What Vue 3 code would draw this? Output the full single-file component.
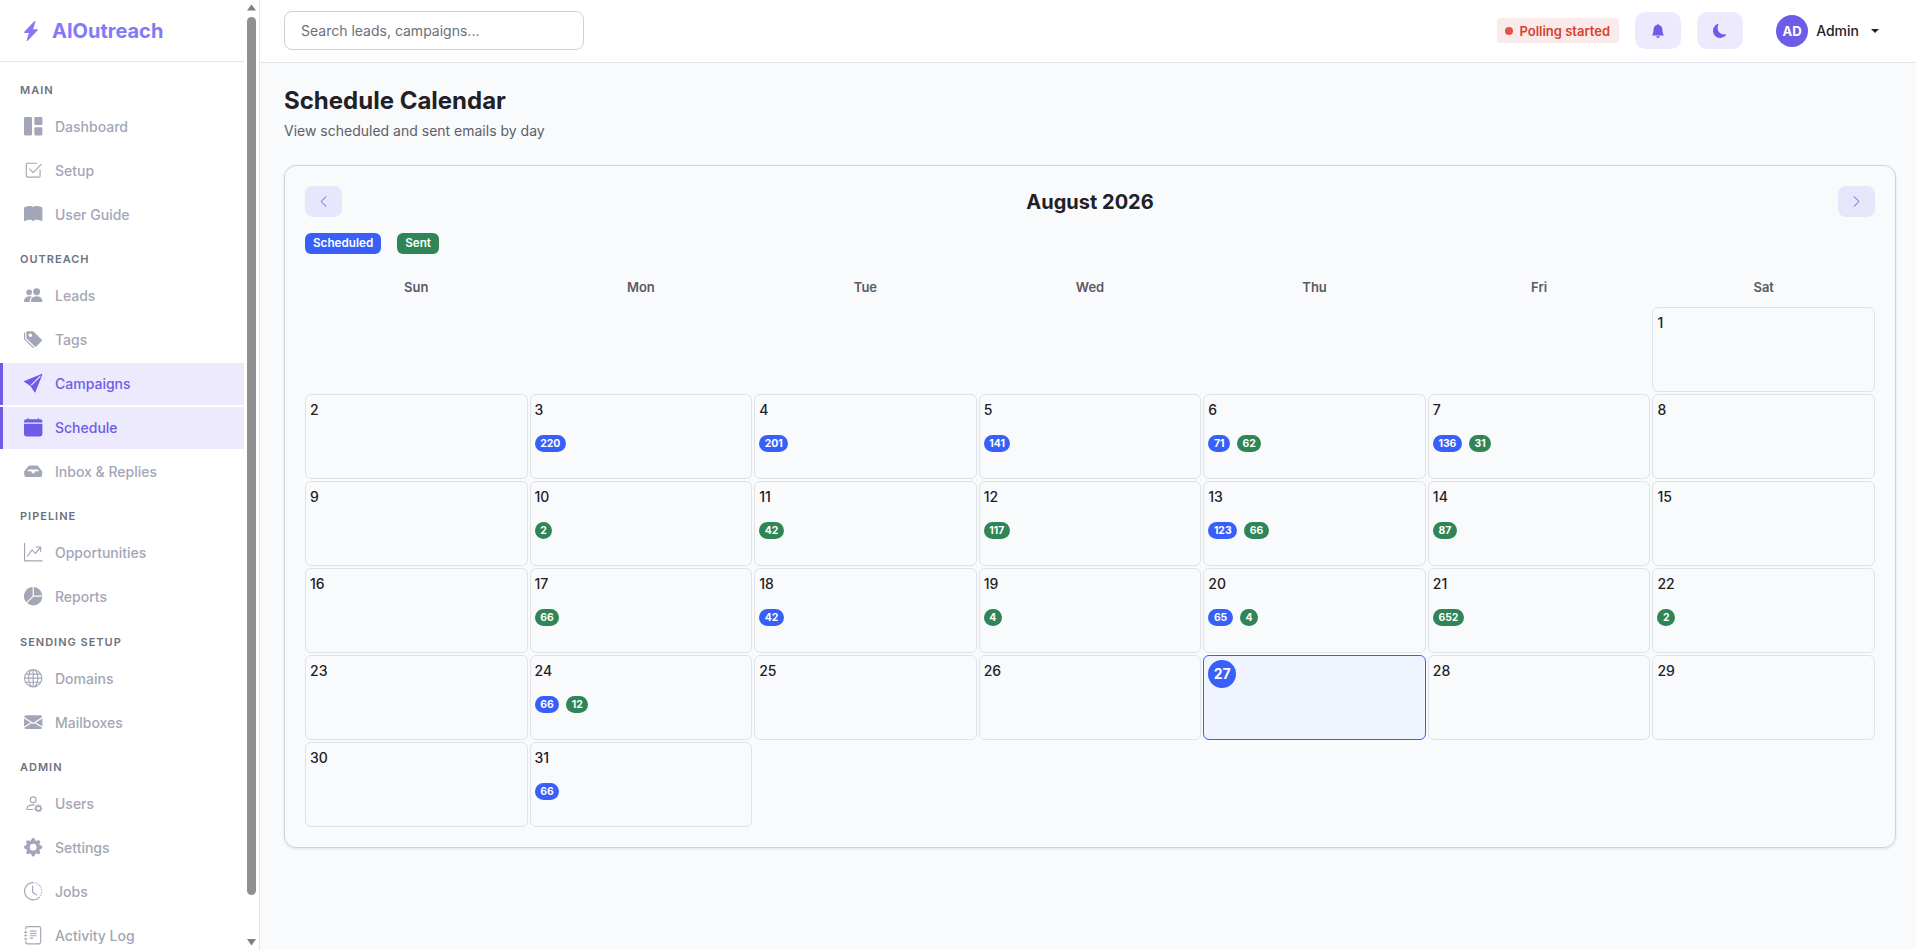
<script setup>
const icons = {
  grid: 'M0 1a1 1 0 0 1 1-1h5a1 1 0 0 1 1 1v14a1 1 0 0 1-1 1H1a1 1 0 0 1-1-1V1zm9 0a1 1 0 0 1 1-1h5a1 1 0 0 1 1 1v5a1 1 0 0 1-1 1h-5a1 1 0 0 1-1-1V1zm0 9a1 1 0 0 1 1-1h5a1 1 0 0 1 1 1v5a1 1 0 0 1-1 1h-5a1 1 0 0 1-1-1v-5z',
  check: 'M3 14.5A1.5 1.5 0 0 1 1.5 13V3A1.5 1.5 0 0 1 3 1.5h8a.5.5 0 0 1 0 1H3a.5.5 0 0 0-.5.5v10a.5.5 0 0 0 .5.5h10a.5.5 0 0 0 .5-.5V8a.5.5 0 0 1 1 0v5a1.5 1.5 0 0 1-1.5 1.5H3zM15.354 3.354l-7 7a.5.5 0 0 1-.708 0l-3-3a.5.5 0 1 1 .708-.708L8 9.293l6.646-6.647a.5.5 0 0 1 .708.708z',
  book: 'M8 1.783C7.015.936 5.587.81 4.287.94c-1.514.153-3.042.672-3.994 1.105A.5.5 0 0 0 0 2.5v11a.5.5 0 0 0 .707.455c.882-.4 2.303-.881 3.68-1.02 1.409-.142 2.59.087 3.223.877a.5.5 0 0 0 .78 0c.633-.79 1.814-1.019 3.222-.877 1.378.139 2.8.62 3.681 1.02A.5.5 0 0 0 16 13.5v-11a.5.5 0 0 0-.293-.455c-.952-.433-2.48-.952-3.994-1.105C10.413.809 8.985.936 8 1.783z',
  people: 'M7 14s-1 0-1-1 1-4 5-4 5 3 5 4-1 1-1 1H7Zm4-6a3 3 0 1 0 0-6 3 3 0 0 0 0 6Zm-5.784 6A2.238 2.238 0 0 1 5 13c0-1.355.68-2.75 1.936-3.72A6.325 6.325 0 0 0 5 9c-4 0-5 3-5 4s1 1 1 1h4.216ZM4.5 8a2.5 2.5 0 1 0 0-5 2.5 2.5 0 0 0 0 5Z',
  tags: 'M2 2a1 1 0 0 1 1-1h4.586a1 1 0 0 1 .707.293l7 7a1 1 0 0 1 0 1.414l-4.586 4.586a1 1 0 0 1-1.414 0l-7-7A1 1 0 0 1 2 6.586V2zm3.5 4a1.5 1.5 0 1 0 0-3 1.5 1.5 0 0 0 0 3zM1.293 7.793A1 1 0 0 1 1 7.086V2a1 1 0 0 0-1 1v4.586a1 1 0 0 0 .293.707l7 7a1 1 0 0 0 1.414 0l.043-.043-7.457-7.457z',
  send: 'M15.964.686a.5.5 0 0 0-.65-.65L.767 5.855H.766l-.452.18a.5.5 0 0 0-.082.887l.41.26.001.002 4.995 3.178 3.178 4.995.002.002.26.41a.5.5 0 0 0 .886-.083l6-15Zm-1.833 1.89L6.637 10.07l-.215-.338a.5.5 0 0 0-.154-.154l-.338-.215 7.494-7.494 1.178-.471-.47 1.178Z',
  calendar: 'M3.5 0a.5.5 0 0 1 .5.5V1h8V.5a.5.5 0 0 1 1 0V1h1a2 2 0 0 1 2 2v11a2 2 0 0 1-2 2H2a2 2 0 0 1-2-2V5h16V4H0V3a2 2 0 0 1 2-2h1V.5a.5.5 0 0 1 .5-.5z',
  inbox: 'M3.81 3.563A1.5 1.5 0 0 1 4.98 3h6.04a1.5 1.5 0 0 1 1.17.563l3.7 4.625a.5.5 0 0 1 .106.374l-.39 3.124A1.5 1.5 0 0 1 14.117 13H1.883a1.5 1.5 0 0 1-1.489-1.314l-.39-3.124a.5.5 0 0 1 .106-.374zM3.9 6.6 2.8 8H6a.5.5 0 0 1 .5.5 1.5 1.5 0 1 0 3 0A.5.5 0 0 1 10 8h3.2l-1.1-1.4z',
  graph: 'M0 0h1v15h15v1H0V0Zm10 3.5a.5.5 0 0 1 .5-.5h4a.5.5 0 0 1 .5.5v4a.5.5 0 0 1-1 0V4.9l-3.613 4.417a.5.5 0 0 1-.74.037L7.06 6.767l-3.656 5.027a.5.5 0 0 1-.808-.588l4-5.5a.5.5 0 0 1 .758-.06l2.609 2.61L13.445 4H10.5a.5.5 0 0 1-.5-.5Z',
  pie: 'M15.985 8.5H8.207l-5.5 5.5a8 8 0 0 0 13.277-5.5zM2 13.292A8 8 0 0 1 7.5.015v7.778l-5.5 5.5zM8.5.015V7.5h7.485A8.001 8.001 0 0 0 8.5.015z',
  globe: 'M0 8a8 8 0 1 1 16 0A8 8 0 0 1 0 8zm7.5-6.923c-.67.204-1.335.82-1.887 1.855A7.97 7.97 0 0 0 5.145 4H7.5V1.077zM4.09 4a9.267 9.267 0 0 1 .64-1.539 6.7 6.7 0 0 1 .597-.933A7.025 7.025 0 0 0 2.255 4H4.09zm-.582 3.5c.03-.877.138-1.718.312-2.5H1.674a6.958 6.958 0 0 0-.656 2.5h2.49zM4.847 5a12.5 12.5 0 0 0-.338 2.5H7.5V5H4.847zM8.5 5v2.5h2.99a12.495 12.495 0 0 0-.337-2.5H8.5zM4.51 8.5a12.5 12.5 0 0 0 .337 2.5H7.5V8.5H4.51zm3.99 0V11h2.653c.187-.765.306-1.608.338-2.5H8.5zM5.145 12c.138.386.295.744.468 1.068.552 1.035 1.218 1.65 1.887 1.855V12H5.145zm.182 2.472a6.696 6.696 0 0 1-.597-.933A9.268 9.268 0 0 1 4.09 12H2.255a7.024 7.024 0 0 0 3.072 2.472zM3.82 11a13.652 13.652 0 0 1-.312-2.5h-2.49c.062.89.291 1.733.656 2.5H3.82zm6.853 3.472A7.024 7.024 0 0 0 13.745 12H11.91a9.27 9.27 0 0 1-.64 1.539 6.688 6.688 0 0 1-.597.933zM8.5 12v2.923c.67-.204 1.335-.82 1.887-1.855.173-.324.33-.682.468-1.068H8.5zm3.68-1h2.146c.365-.767.594-1.61.656-2.5h-2.49a13.65 13.65 0 0 1-.312 2.5zm2.802-3.5a6.959 6.959 0 0 0-.656-2.5H12.18c.174.782.282 1.623.312 2.5h2.49zM11.27 2.461c.247.464.462.98.64 1.539h1.835a7.024 7.024 0 0 0-3.072-2.472c.218.284.418.598.597.933zM10.855 4a7.966 7.966 0 0 0-.468-1.068C9.835 1.897 9.17 1.282 8.5 1.077V4h2.355z',
  mail: 'M.05 3.555A2 2 0 0 1 2 2h12a2 2 0 0 1 1.95 1.555L8 8.414.05 3.555ZM0 4.697v7.104l5.803-3.558L0 4.697ZM6.761 8.83l-6.57 4.027A2 2 0 0 0 2 14h12a2 2 0 0 0 1.808-1.144l-6.57-4.027L8 9.586l-1.239-.757Zm3.436-.586L16 11.801V4.697l-5.803 3.546Z',
  usergear: 'M11 5a3 3 0 1 1-6 0 3 3 0 0 1 6 0ZM8 7a2 2 0 1 0 0-4 2 2 0 0 0 0 4Zm.256 7a4.474 4.474 0 0 1-.229-1.004H3c.001-.246.154-.986.832-1.664C4.484 10.68 5.711 10 8 10c.26 0 .507.009.74.025.226-.341.496-.65.804-.918C9.077 9.038 8.564 9 8 9c-5 0-6 3-6 4s1 1 1 1h5.256Zm3.63-4.54c.18-.613 1.048-.613 1.229 0l.043.148a.64.64 0 0 0 .921.382l.136-.074c.561-.306 1.175.308.87.869l-.075.136a.64.64 0 0 0 .382.92l.149.045c.612.18.612 1.048 0 1.229l-.15.043a.64.64 0 0 0-.38.921l.074.136c.305.561-.309 1.175-.87.87l-.136-.075a.64.64 0 0 0-.92.382l-.045.149c-.18.612-1.048.612-1.229 0l-.043-.15a.64.64 0 0 0-.921-.38l-.136.074c-.561.305-1.175-.309-.87-.87l.075-.136a.64.64 0 0 0-.382-.92l-.148-.045c-.613-.18-.613-1.048 0-1.229l.148-.043a.64.64 0 0 0 .382-.921l-.074-.136c-.306-.561.308-1.175.869-.87l.136.075a.64.64 0 0 0 .92-.382l.045-.149ZM14 12.5a1.5 1.5 0 1 0-3 0 1.5 1.5 0 0 0 3 0Z',
  gear: 'M9.405 1.05c-.413-1.4-2.397-1.4-2.81 0l-.1.34a1.464 1.464 0 0 1-2.105.872l-.31-.17c-1.283-.698-2.686.705-1.987 1.987l.169.311c.446.82.023 1.841-.872 2.105l-.34.1c-1.4.413-1.4 2.397 0 2.81l.34.1a1.464 1.464 0 0 1 .872 2.105l-.17.31c-.698 1.283.705 2.686 1.987 1.987l.311-.169a1.464 1.464 0 0 1 2.105.872l.1.34c.413 1.4 2.397 1.4 2.81 0l.1-.34a1.464 1.464 0 0 1 2.105-.872l.31.17c1.283.698 2.686-.705 1.987-1.987l-.169-.311a1.464 1.464 0 0 1 .872-2.105l.34-.1c1.4-.413 1.4-2.397 0-2.81l-.34-.1a1.464 1.464 0 0 1-.872-2.105l.17-.31c.698-1.283-.705-2.686-1.987-1.987l-.311.169a1.464 1.464 0 0 1-2.105-.872l-.1-.34zM8 10.93a2.929 2.929 0 1 1 0-5.86 2.929 2.929 0 0 1 0 5.858z',
  clock: 'M8.515 1.019A7 7 0 0 0 8 1V0a8 8 0 0 1 .589.022l-.074.997zm2.004.45a7.003 7.003 0 0 0-.985-.299l.219-.976c.383.086.76.2 1.126.342l-.36.933zm1.37.71a7.01 7.01 0 0 0-.439-.27l.493-.87a8.025 8.025 0 0 1 .979.654l-.615.789a6.996 6.996 0 0 0-.418-.302zm1.834 1.79a6.99 6.99 0 0 0-.653-.796l.724-.69c.27.285.52.59.747.91l-.818.576zm.744 1.352a7.08 7.08 0 0 0-.214-.468l.893-.45a7.976 7.976 0 0 1 .45 1.088l-.95.313a7.023 7.023 0 0 0-.179-.483zm.53 2.507a6.991 6.991 0 0 0-.1-1.025l.985-.17c.067.386.106.778.116 1.17l-1 .025zm-.131 1.538c.033-.17.06-.339.081-.51l.993.123a7.957 7.957 0 0 1-.23 1.155l-.964-.267c.046-.165.086-.332.12-.501zm-.952 2.379c.184-.29.346-.594.486-.908l.914.405c-.16.36-.345.706-.555 1.038l-.845-.535zm-.964 1.205c.122-.122.239-.248.35-.378l.758.653a8.073 8.073 0 0 1-.401.432l-.707-.707zM8 1a7 7 0 1 0 4.95 11.95l.707.707A8.001 8.001 0 1 1 8 0v1zM7.5 3a.5.5 0 0 1 .5.5v5.21l3.248 1.856a.5.5 0 0 1-.496.868l-3.5-2A.5.5 0 0 1 7 9V3.5a.5.5 0 0 1 .5-.5z',
  journal: 'M5 10.5a.5.5 0 0 1 .5-.5h2a.5.5 0 0 1 0 1h-2a.5.5 0 0 1-.5-.5zm0-2a.5.5 0 0 1 .5-.5h5a.5.5 0 0 1 0 1h-5a.5.5 0 0 1-.5-.5zm0-2a.5.5 0 0 1 .5-.5h5a.5.5 0 0 1 0 1h-5a.5.5 0 0 1-.5-.5zm0-2a.5.5 0 0 1 .5-.5h5a.5.5 0 0 1 0 1h-5a.5.5 0 0 1-.5-.5zM3 0h10a2 2 0 0 1 2 2v12a2 2 0 0 1-2 2H3a2 2 0 0 1-2-2v-1h1v1a1 1 0 0 0 1 1h10a1 1 0 0 0 1-1V2a1 1 0 0 0-1-1H3a1 1 0 0 0-1 1v1H1V2a2 2 0 0 1 2-2zM1 5v-.5a.5.5 0 0 1 1 0V5h.5a.5.5 0 0 1 0 1h-2a.5.5 0 0 1 0-1H1zm0 3v-.5a.5.5 0 0 1 1 0V8h.5a.5.5 0 0 1 0 1h-2a.5.5 0 0 1 0-1H1zm0 3v-.5a.5.5 0 0 1 1 0v.5h.5a.5.5 0 0 1 0 1h-2a.5.5 0 0 1 0-1H1z',
  bolt: 'M11.251.068a.5.5 0 0 1 .227.58L9.677 6.5H13a.5.5 0 0 1 .364.843l-8 8.5a.5.5 0 0 1-.842-.49L6.323 9.5H3a.5.5 0 0 1-.364-.843l8-8.5a.5.5 0 0 1 .615-.09z',
  bell: 'M8 16a2 2 0 0 0 2-2H6a2 2 0 0 0 2 2zm.995-14.901a1 1 0 1 0-1.99 0A5.002 5.002 0 0 0 3 6c0 1.098-.5 6-2 7h14c-1.5-1-2-5.902-2-7 0-2.42-1.72-4.44-4.005-4.901z',
  moon: 'M6 .278a.768.768 0 0 1 .08.858 7.208 7.208 0 0 0-.878 3.46c0 4.021 3.278 7.277 7.318 7.277.527 0 1.04-.055 1.533-.16a.787.787 0 0 1 .81.316.733.733 0 0 1-.031.893A8.349 8.349 0 0 1 8.344 16C3.734 16 0 12.286 0 7.71 0 4.266 2.114 1.312 5.124.06A.752.752 0 0 1 6 .278z',
  left: 'M11.354 1.646a.5.5 0 0 1 0 .708L5.707 8l5.647 5.646a.5.5 0 0 1-.708.708l-6-6a.5.5 0 0 1 0-.708l6-6a.5.5 0 0 1 .708 0z',
  right: 'M4.646 1.646a.5.5 0 0 1 .708 0l6 6a.5.5 0 0 1 0 .708l-6 6a.5.5 0 0 1-.708-.708L10.293 8 4.646 2.354a.5.5 0 0 1 0-.708z',
}

const navSections = [
  { title: 'MAIN', items: [
    { label: 'Dashboard', icon: 'grid' },
    { label: 'Setup', icon: 'check' },
    { label: 'User Guide', icon: 'book' },
  ] },
  { title: 'OUTREACH', items: [
    { label: 'Leads', icon: 'people' },
    { label: 'Tags', icon: 'tags' },
    { label: 'Campaigns', icon: 'send', active: true },
    { label: 'Schedule', icon: 'calendar', active: true },
    { label: 'Inbox & Replies', icon: 'inbox' },
  ] },
  { title: 'PIPELINE', items: [
    { label: 'Opportunities', icon: 'graph' },
    { label: 'Reports', icon: 'pie' },
  ] },
  { title: 'SENDING SETUP', items: [
    { label: 'Domains', icon: 'globe' },
    { label: 'Mailboxes', icon: 'mail' },
  ] },
  { title: 'ADMIN', items: [
    { label: 'Users', icon: 'usergear' },
    { label: 'Settings', icon: 'gear' },
    { label: 'Jobs', icon: 'clock' },
    { label: 'Activity Log', icon: 'journal' },
  ] },
]

const weekdays = ['Sun', 'Mon', 'Tue', 'Wed', 'Thu', 'Fri', 'Sat']

// [scheduled, sent] per day
const counts = {
  3: [220], 4: [201], 5: [141], 6: [71, 62], 7: [136, 31],
  10: [0, 2], 11: [0, 42], 12: [0, 117], 13: [123, 66], 14: [0, 87],
  17: [0, 66], 18: [42], 19: [0, 4], 20: [65, 4], 21: [0, 652], 22: [0, 2],
  24: [66, 12], 31: [66],
}

const blanks = 6
const days = Array.from({ length: 31 }, (_, i) => {
  const c = counts[i + 1] || []
  return { day: i + 1, scheduled: c[0] || 0, sent: c[1] || 0, today: i + 1 === 27 }
})
</script>

<template>
  <div class="layout">
    <aside class="sidebar">
      <div class="side-scroll">
        <div class="brand">
          <svg class="brand-icon" viewBox="0 0 16 16" fill="currentColor"><path :d="icons.bolt" /></svg>
          <span>AIOutreach</span>
        </div>
        <nav class="nav">
          <div v-for="section in navSections" :key="section.title" class="nav-section">
            <div class="nav-title">{{ section.title }}</div>
            <a v-for="item in section.items" :key="item.label" class="nav-item" :class="{ active: item.active }">
              <svg class="nav-icon" viewBox="0 0 16 16" fill="currentColor" fill-rule="evenodd"><path :d="icons[item.icon]" /></svg>
              <span>{{ item.label }}</span>
            </a>
          </div>
        </nav>
      </div>
      <!-- native scrollbars don't show in the headless shot, so this one is drawn -->
      <div class="scrollbar">
        <svg class="arrow" viewBox="0 0 15 17"><path d="M3 10.5 7.5 4.5 12 10.5z" /></svg>
        <div class="thumb"></div>
        <svg class="arrow bottom" viewBox="0 0 15 17"><path d="M3 6 7.5 12.5 12 6z" /></svg>
      </div>
    </aside>

    <div class="main">
      <header class="topbar">
        <input class="search" type="text" placeholder="Search leads, campaigns..." />
        <div class="topbar-right">
          <div class="polling"><span class="dot"></span>Polling started</div>
          <button class="icon-btn">
            <svg viewBox="0 0 16 16" fill="currentColor"><path :d="icons.bell" /></svg>
          </button>
          <button class="icon-btn">
            <svg viewBox="0 0 16 16" fill="currentColor"><path :d="icons.moon" /></svg>
          </button>
          <div class="user">
            <div class="avatar">AD</div>
            <span class="user-name">Admin</span>
            <span class="caret"></span>
          </div>
        </div>
      </header>

      <main class="content">
        <h1 class="page-title">Schedule Calendar</h1>
        <p class="page-sub">View scheduled and sent emails by day</p>

        <section class="card">
          <div class="card-head">
            <button class="month-btn">
              <svg viewBox="0 0 16 16" fill="currentColor"><path :d="icons.left" /></svg>
            </button>
            <h2 class="month">August 2026</h2>
            <button class="month-btn">
              <svg viewBox="0 0 16 16" fill="currentColor"><path :d="icons.right" /></svg>
            </button>
          </div>

          <div class="legend">
            <span class="legend-tag blue">Scheduled</span>
            <span class="legend-tag green">Sent</span>
          </div>

          <div class="grid">
            <div v-for="d in weekdays" :key="d" class="weekday">{{ d }}</div>
            <div v-for="n in blanks" :key="'b' + n"></div>
            <div v-for="d in days" :key="d.day" class="cell" :class="{ today: d.today }">
              <div class="num">{{ d.day }}</div>
              <div v-if="d.scheduled || d.sent" class="pills">
                <span v-if="d.scheduled" class="pill blue">{{ d.scheduled }}</span>
                <span v-if="d.sent" class="pill green">{{ d.sent }}</span>
              </div>
            </div>
          </div>
        </section>
      </main>
    </div>
  </div>
</template>

<style>
html, body {
  margin: 0;
  height: 100%;
  overflow: hidden;
}
</style>

<style scoped>
.layout {
  display: flex;
  height: 100vh;
  font-family: Inter, "Noto Sans", sans-serif;
  color: #1f2126;
  background: #f9fafc;
}

.sidebar {
  width: 260px;
  flex: none;
  box-sizing: border-box;
  background: #fff;
  border-right: 1px solid #e2e5ee;
  display: flex;
  overflow: hidden;
}

.side-scroll {
  width: 244px;
  flex: none;
}

.scrollbar {
  width: 15px;
  flex: none;
  display: flex;
  flex-direction: column;
  align-items: center;
}

.arrow {
  width: 15px;
  height: 17px;
  flex: none;
  fill: #808080;
}

.arrow.bottom {
  margin-top: auto;
}

.thumb {
  width: 9px;
  height: 878px;
  flex: none;
  border-radius: 5px;
  background: #8f8f8f;
}

.brand {
  height: 62px;
  box-sizing: border-box;
  border-bottom: 1px solid #e2e5ee;
  display: flex;
  align-items: center;
  gap: 11px;
  padding-left: 21px;
  font-size: 20px;
  font-weight: 700;
  color: #8279f6;
}

.brand-icon {
  width: 20px;
  height: 20px;
}

.nav {
  padding-top: 21px;
}

.nav-section + .nav-section {
  margin-top: 16px;
}

.nav-section:nth-child(4) {
  margin-top: 17px;
}

.nav-title {
  padding-left: 20px;
  margin-bottom: 9px;
  font-size: 11px;
  line-height: 14px;
  font-weight: 600;
  letter-spacing: 1px;
  color: #6b7280;
}

.nav-item {
  height: 42px;
  box-sizing: border-box;
  display: flex;
  align-items: center;
  gap: 12.3px;
  padding: 0 0 1px 21.3px;
  border-left: 3px solid transparent;
  font-size: 14px;
  font-weight: 500;
  color: #a3a6b6;
}

.nav-item + .nav-item {
  margin-top: 2px;
}

.nav-item.active {
  background: #eeeafe;
  border-left-color: #6c5ce7;
  color: #6c5ce7;
}

.nav-icon {
  width: 18.4px;
  height: 18.4px;
  flex: none;
}

.main {
  flex: 1;
  min-width: 0;
  display: flex;
  flex-direction: column;
}

.topbar {
  height: 63px;
  box-sizing: border-box;
  flex: none;
  background: #fff;
  border-bottom: 1px solid #e2e5ee;
  display: flex;
  align-items: center;
  justify-content: space-between;
  padding: 0 24px 1px;
}

.search {
  width: 300px;
  height: 39px;
  box-sizing: border-box;
  padding: 0 16px;
  border: 1px solid #cfd2d9;
  border-radius: 8px;
  background: #fff;
  font-family: inherit;
  font-size: 14px;
  outline: none;
}

.search::placeholder {
  color: #6b7078;
}

.topbar-right {
  display: flex;
  align-items: center;
  gap: 16px;
}

.polling {
  height: 25px;
  display: flex;
  align-items: center;
  gap: 6px;
  padding: 0 9px 0 8px;
  border-radius: 4px;
  background: #fbeaea;
  color: #d8412f;
  font-size: 13px;
  font-weight: 600;
}

.dot {
  width: 8px;
  height: 8px;
  border-radius: 50%;
  background: #e0564a;
}

.icon-btn {
  width: 46px;
  height: 37px;
  border: none;
  border-radius: 10px;
  background: #eeeafe;
  color: #6c5ce7;
  padding: 0;
  display: flex;
  align-items: center;
  justify-content: center;
}

.icon-btn svg {
  width: 14px;
  height: 14px;
}

.user {
  display: flex;
  align-items: center;
  padding: 0 13px 0 17px;
}

.avatar {
  width: 32px;
  height: 32px;
  border-radius: 50%;
  background: #6c5ce7;
  color: #fff;
  font-size: 13px;
  font-weight: 700;
  display: flex;
  align-items: center;
  justify-content: center;
}

.user-name {
  margin-left: 8px;
  font-size: 14px;
  font-weight: 500;
  color: #1f2126;
}

.caret {
  margin-left: 12px;
  width: 0;
  height: 0;
  border-left: 4px solid transparent;
  border-right: 4px solid transparent;
  border-top: 4px solid #1f2126;
}

.content {
  flex: 1;
  padding: 23px 20px 24px 24px;
}

.page-title {
  margin: 0;
  font-size: 24px;
  line-height: 29px;
  font-weight: 700;
  color: #1f2126;
}

.page-sub {
  margin: 7px 0 0;
  font-size: 14px;
  line-height: 17px;
  color: #5e6068;
}

.card {
  margin-top: 26px;
  padding: 20px;
  border: 1px solid #cfd1d6;
  border-radius: 12px;
  box-shadow: 0 1px 3px rgba(0, 0, 0, 0.1);
}

.card-head {
  display: flex;
  align-items: center;
  justify-content: space-between;
}

.month {
  margin: 0;
  font-size: 20px;
  font-weight: 700;
  color: #1f2126;
}

.month-btn {
  width: 37px;
  height: 31px;
  border: none;
  border-radius: 8px;
  background: #e7e6fa;
  color: #7f70ee;
  padding: 0;
  display: flex;
  align-items: center;
  justify-content: center;
}

.month-btn svg {
  width: 13px;
  height: 13px;
}

.legend {
  display: flex;
  gap: 16px;
  margin: 16px 0;
}

.legend-tag {
  height: 21px;
  display: flex;
  align-items: center;
  padding: 0 8px 1px;
  box-sizing: border-box;
  border-radius: 6px;
  color: #fff;
  font-size: 11.7px;
  font-weight: 600;
}

.blue {
  background: #3860f8;
}

.green {
  background: #2f8556;
}

.grid {
  display: grid;
  grid-template-columns: repeat(7, 1fr);
  gap: 2px;
}

.weekday {
  height: 35px;
  box-sizing: border-box;
  padding-bottom: 1px;
  display: flex;
  align-items: center;
  justify-content: center;
  font-size: 13px;
  font-weight: 600;
  color: #5a5a62;
}

.cell {
  height: 85px;
  box-sizing: border-box;
  padding: 4px;
  border: 1px solid #e0e2e8;
  border-radius: 6px;
}

.cell.today {
  background: #f0f4ff;
  border-color: #3860f8;
}

.num {
  font-size: 14px;
  line-height: 22px;
  font-weight: 500;
  color: #1f2126;
}

.today .num {
  width: 28px;
  height: 28px;
  line-height: 28px;
  border-radius: 50%;
  text-align: center;
  background: #3860f8;
  color: #fff;
  font-weight: 700;
}

.pills {
  display: flex;
  gap: 7px;
  margin-top: 14px;
}

.pill {
  height: 17px;
  display: flex;
  align-items: center;
  padding: 0 5.6px;
  border-radius: 9px;
  color: #fff;
  font-size: 10.4px;
  font-weight: 700;
}
</style>
